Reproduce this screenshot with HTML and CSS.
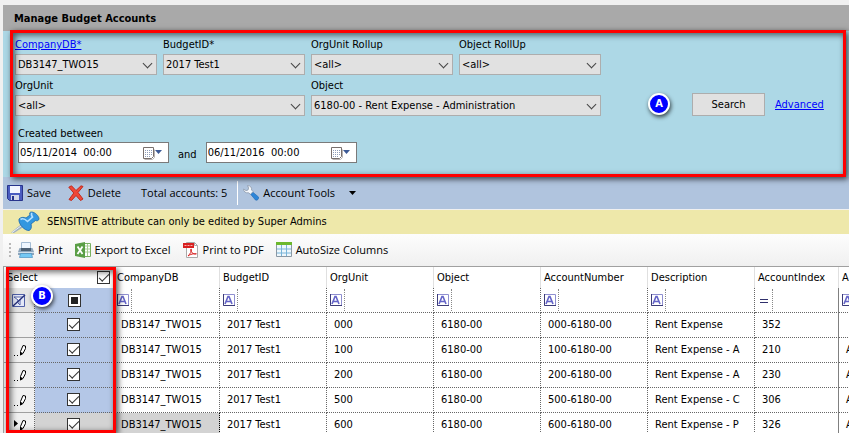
FILE: index.html
```html
<!DOCTYPE html>
<html lang="en">
<head>
<meta charset="utf-8">
<title>Manage Budget Accounts</title>
<link rel="stylesheet" href="styles.css">
</head>
<body>
<svg class="defs" aria-hidden="true">
  <symbol id="pencil" viewBox="0 0 14 14">
    <path d="M7.500 12 7.500 8.500 10 2.500l2.500.5v2.500L10 10.500z" fill="#fff" stroke="#000"/>
    <path d="m7 12.500 3-2.500-2.500-1z" fill="#000"/>
  </symbol>
  <symbol id="dots" viewBox="0 0 14 14">
    <path d="M1 12.500h1M4 12.500h1" stroke="#000"/>
  </symbol>
  <symbol id="text-filter" viewBox="0 0 12 12">
    <path d="M.5.5h11v11H.5z" fill="#fff" stroke="#8f8fd0"/>
    <path d="M.5 0v11.500H12" fill="none" stroke="#3c3c78"/>
    <path d="M2 10 5 2.500h1L9 10M3.500 7.500h4" fill="none" stroke="#6464c8" stroke-width="1.600"/>
  </symbol>
  <symbol id="calendar" viewBox="0 0 20 14">
    <path d="M2.500 13.500h8l2-2v-8" fill="none" stroke="#b8b4b4"/>
    <path d="M1.500 1.500h10v9l-2 2h-8z" fill="#fff" stroke="#776f6c"/>
    <path d="M3 4.500h7M3 6.500h7M3 8.500h7M3 10.500h5" stroke="#8f9db8" stroke-dasharray="1 1"/>
    <path d="M13 4h7l-3.500 4z" fill="#3c5a96"/>
  </symbol>
</svg>
<main class="window">
  <h1 class="title">Manage Budget Accounts</h1>

  <form class="criteria">
    <div class="fields">
      <div class="field"><label for="company"><a href="#company">CompanyDB*</a></label>
        <span class="combo"><select id="company"><option>DB3147_TWO15</option></select></span></div>
      <div class="field"><label for="budget">BudgetID*</label>
        <span class="combo"><select id="budget"><option>2017 Test1</option></select></span></div>
      <div class="field"><label for="unit-rollup">OrgUnit Rollup</label>
        <span class="combo"><select id="unit-rollup"><option>&lt;all&gt;</option></select></span></div>
      <div class="field"><label for="object-rollup">Object RollUp</label>
        <span class="combo"><select id="object-rollup"><option>&lt;all&gt;</option></select></span></div>
      <div class="field wide"><label for="unit">OrgUnit</label>
        <span class="combo"><select id="unit"><option>&lt;all&gt;</option></select></span></div>
      <div class="field wide"><label for="object">Object</label>
        <span class="combo"><select id="object"><option>6180-00 - Rent Expense - Administration</option></select></span></div>
    </div>
    <div class="actions">
      <span class="badge">A</span>
      <button type="button" class="search">Search</button>
      <a href="#advanced">Advanced</a>
    </div>
    <div class="created">
      <label for="from">Created between</label>
      <div class="dates">
        <span class="date"><input id="from" type="text" value="05/11/2014  00:00"><button type="button" aria-label="Pick start date"><svg width="20" height="14"><use href="#calendar"/></svg></button></span>
        <label for="to">and</label>
        <span class="date"><input id="to" type="text" value="06/11/2016  00:00"><button type="button" aria-label="Pick end date"><svg width="20" height="14"><use href="#calendar"/></svg></button></span>
      </div>
    </div>
    <span class="outline"></span>
  </form>

  <div class="toolbar main-tools">
    <button type="button"><svg width="16" height="16" viewBox="0 0 16 16"><path d="M.5.5h15v15h-13l-2-2z" fill="#4a5cc0" stroke="#28348c"/><path d="M3 1h10v7H3z" fill="#f4f6ff"/><path d="M4 10h8v5H4z" fill="#d4d8e8"/><path d="M5 11h2v4H5z" fill="#28348c"/></svg>Save</button>
    <button type="button"><svg width="16" height="16" viewBox="0 0 16 16"><path d="M.8 2.200 3.500.8 8 5.500 13 .8l2 .7-5 6 5 6.500-2.500 1.500L8 10.500l-4.500 5-2.500-1 4.800-6.500z" fill="#f04838" stroke="#c02c20"/></svg>Delete</button>
    <span class="total">Total accounts: 5</span>
    <button type="button" class="tools"><svg width="16" height="16" viewBox="0 0 16 16"><path d="m7 8.500 2-2 6.500 5.500c1 1.500-1.500 4-3 3z" fill="#2e86d8" stroke="#1c66b0" stroke-width=".6"/><path d="M4.500.6C7.500.6 9 2.500 8.600 5L10.200 6.600 7.400 9.300 5.500 7.800C2.500 8.300.5 6.500.6 4L3 5.600 5 5 5.600 3z" fill="#f4f7fb" stroke="#8d99ab" stroke-width=".8"/></svg>Account Tools<svg class="caret" width="7" height="4" viewBox="0 0 7 4"><path d="M0 0h7L3.500 4z"/></svg></button>
  </div>

  <p class="notice"><svg width="30" height="22" viewBox="0 0 30 22"><path d="m0 21.500 11-9 3 2.500L3 22z" fill="#9eb0c0"/><path d="m1 21.500 11-8" stroke="#fff" stroke-width=".8"/><path d="M8 8c2-2 5-2 7-1l4-3c-1-2 0-3 1.500-3C24 1 28 5 28 8c-.500 2-2.500 2-3.500 1.500L20 13c1 3 0 6-2 6.500C14 20 7 13 8 8z" fill="#3397e0" stroke="#1b69ad" stroke-width=".8"/><path d="M9.500 8.500c2-1.500 5 0 7 2l5-4.500c-1-1.500-1.500-3-.5-4" fill="none" stroke="#b4e0ff" stroke-width="1.600"/></svg>SENSITIVE attribute can only be edited by Super Admins</p>

  <div class="toolbar export-tools">
    <span class="grip"></span>
    <button type="button"><svg width="16" height="16" viewBox="0 0 16 16"><path d="M3.500.5h9V8h-9z" fill="#eef6ff" stroke="#a4bcd4"/><path d="M1.500 6h13L16 10v3H0v-3z" fill="#8ea6bc"/><path d="M3 6h10v3H3z" fill="#4c6074"/><path d="M0 10h16v1H0z" fill="#d4e0ea"/><path d="M2.500 11.500h11l1 4h-13z" fill="#74c8f4" stroke="#4c90c0" stroke-width=".7"/></svg>Print</button>
    <button type="button"><svg width="16" height="16" viewBox="0 0 16 16"><path d="M5 1.500h10.500v13H5z" fill="#fff" stroke="#78b060"/><path d="M10 4h5M10 7h5M10 10h5M12.500 2v12" stroke="#a4cc90"/><path d="M0 2 10 0v16L0 14z" fill="#5a9e46"/><path d="m2.500 4.500 5 7.500M7.500 4.500l-5 7.500" stroke="#fff" stroke-width="1.800"/></svg>Export to Excel</button>
    <button type="button"><svg width="16" height="16" viewBox="0 0 16 16"><path d="M3.500.5h8l3 3v12h-11z" fill="#fff" stroke="#aaa"/><path d="M11.500.5v3h3" fill="none" stroke="#aaa"/><path d="M0 1h11v5H0z" fill="#d82020"/><path d="M1.500 3.500h8" stroke="#f8b0b0" stroke-dasharray="2 1"/><path d="M5 14c2-2 4-5 3.500-6.500S7 8 8 9.500s3 3 5 2.500-4-1-8 2z" fill="none" stroke="#d82020"/></svg>Print to PDF</button>
    <button type="button"><svg width="16" height="16" viewBox="0 0 16 16"><path d="M.5.5h15v14H.5z" fill="#eef7fc" stroke="#8a98a4"/><path d="M0 0h16v3H0z" fill="#6cb82c"/><path d="M1 7h14M1 11h14M5.500 3v11M10.500 3v11" stroke="#78b4d8"/></svg>AutoSize Columns</button>
  </div>

  <section class="grid">
    <table>
      <colgroup><col class="c-state"><col class="c-check"><col class="c-company"><col class="c-data"><col class="c-data"><col class="c-data"><col class="c-data"><col class="c-data"><col class="c-index"><col class="c-data"></colgroup>
      <thead>
        <tr class="heads"><th colspan="2"><label class="select-all">Select <input type="checkbox" checked></label></th><th>CompanyDB</th><th>BudgetID</th><th>OrgUnit</th><th>Object</th><th>AccountNumber</th><th>Description</th><th>AccountIndex</th><th>A</th></tr>
        <tr class="filters">
          <td class="state"><svg width="14" height="13" viewBox="0 0 14 13"><path d="M.5.5h12v12H.5z" fill="#e4e8f8" stroke="#5060a8"/><path d="M2 3h9L8 6v5L6 9V6z" fill="#fff" stroke="#5060a8"/><path d="m1 12 12-11" stroke="#28327c" stroke-width="1.500"/></svg></td>
          <td class="check"><input type="checkbox" class="mixed" aria-label="Filter by selection"></td>
          <td><span class="op"><svg><use href="#text-filter"/></svg></span></td><td><span class="op"><svg><use href="#text-filter"/></svg></span></td><td><span class="op"><svg><use href="#text-filter"/></svg></span></td><td><span class="op"><svg><use href="#text-filter"/></svg></span></td><td><span class="op"><svg><use href="#text-filter"/></svg></span></td><td><span class="op"><svg><use href="#text-filter"/></svg></span></td><td class="solid"><span class="op"><svg viewBox="0 0 12 12"><path d="M2 5.500h8M2 8.500h8" stroke="#30306c"/></svg></span></td><td><span class="op"><svg><use href="#text-filter"/></svg></span></td>
        </tr>
      </thead>
      <tbody>
        <tr><td class="state"></td><td class="check"><input type="checkbox" checked aria-label="Select 352"></td><td>DB3147_TWO15</td><td>2017 Test1</td><td>000</td><td>6180-00</td><td>000-6180-00</td><td>Rent Expense</td><td class="solid">352</td><td></td></tr>
        <tr><td class="state"><svg width="14" height="14"><use href="#pencil"/><use href="#dots"/></svg></td><td class="check"><input type="checkbox" checked aria-label="Select 210"></td><td>DB3147_TWO15</td><td>2017 Test1</td><td>100</td><td>6180-00</td><td>100-6180-00</td><td>Rent Expense - A</td><td class="solid">210</td><td>A</td></tr>
        <tr><td class="state"><svg width="14" height="14"><use href="#pencil"/><use href="#dots"/></svg></td><td class="check"><input type="checkbox" checked aria-label="Select 230"></td><td>DB3147_TWO15</td><td>2017 Test1</td><td>200</td><td>6180-00</td><td>200-6180-00</td><td>Rent Expense - A</td><td class="solid">230</td><td>A</td></tr>
        <tr><td class="state"><svg width="14" height="14"><use href="#pencil"/><use href="#dots"/></svg></td><td class="check"><input type="checkbox" checked aria-label="Select 306"></td><td>DB3147_TWO15</td><td>2017 Test1</td><td>500</td><td>6180-00</td><td>500-6180-00</td><td>Rent Expense - C</td><td class="solid">306</td><td>A</td></tr>
        <tr class="current"><td class="state"><svg width="14" height="14"><use href="#pencil"/><path d="M1 2v7l4-3.500z"/></svg></td><td class="check"><input type="checkbox" checked aria-label="Select 326"></td><td class="focus">DB3147_TWO15</td><td>2017 Test1</td><td>600</td><td>6180-00</td><td>600-6180-00</td><td>Rent Expense - P</td><td class="solid">326</td><td>A</td></tr>
      </tbody>
    </table>
    <span class="outline"></span>
    <span class="badge">B</span>
  </section>
</main>
</body>
</html>
```
FILE: styles.css
```css
* { box-sizing: border-box; }

body {
  margin: 0;
  background: #f0f0f0;
  color: #000;
  font: 11px/14px "DejaVu Sans Condensed", "DejaVu Sans", sans-serif;
}

button, input, select { font: inherit; color: inherit; margin: 0; }
a { color: #00f; }
.defs { display: none; }

.window {
  display: flex;
  flex-direction: column;
  height: 100vh;
  padding: 5px 0 0 3px;
  overflow: hidden;
}

.title {
  margin: 0;
  padding: 0 11px;
  background: #a9a9a9;
  font-size: 11px;
  line-height: 28px;
  height: 26px;
  flex: none;
}

/* Search criteria */
.criteria {
  position: relative;
  z-index: 1;
  flex: none;
  display: grid;
  grid-template-columns: 586px 1fr;
  column-gap: 47px;
  padding: 3px 12px 14px;
  background: #add8e6;
}
.fields { display: grid; grid-template-columns: repeat(4, 1fr); column-gap: 6px; }
.field { display: flex; flex-direction: column; }
.field label { line-height: 22px; height: 20px; white-space: nowrap; }
.wide { grid-column: span 2; }
.combo { position: relative; display: flex; }
.combo select {
  appearance: none;
  width: 100%;
  height: 21px;
  padding: 0 20px 0 2px;
  border: 1px solid #adadad;
  border-radius: 0;
  background: #e1e1e1;
}
.combo::after {
  content: "";
  position: absolute;
  right: 6px;
  top: 6px;
  width: 6px;
  height: 6px;
  border: solid #444;
  border-width: 0 1px 1px 0;
  transform: rotate(45deg);
  pointer-events: none;
}
.actions { display: flex; align-items: center; align-self: end; height: 24px; }
.actions a { padding-top: 2px; }
.search {
  width: 73px;
  height: 23px;
  margin: 0 10px 0 22px;
  padding: 2px 0 0;
  border: 1px solid #adadad;
  background: #e1e1e1;
}
.created { grid-column: 1 / -1; padding: 10px 3px 0; }
.created > label { display: block; line-height: 16px; }
.dates { display: flex; align-items: center; gap: 9px; }
.dates label { padding-top: 4px; }
.date {
  display: flex;
  align-items: center;
  width: 151px;
  height: 21px;
  border: 1px solid #7a7a7a;
  background: #fff;
}
.date input { flex: 1; min-width: 0; border: 0; padding: 0 1px; background: none; white-space: pre; }
.date button { border: 0; padding: 0 6px; background: none; display: flex; }

/* Callouts */
.outline {
  position: absolute;
  border: 3px solid #f00;
  box-shadow: 2px 2px 6px rgba(0, 0, 0, .7), inset 2px 2px 6px rgba(0, 0, 0, .6);
  pointer-events: none;
}
.criteria .outline { inset: -1px 3px 0 7px; }
.badge {
  width: 22px;
  height: 22px;
  border: 2px solid #fff;
  border-radius: 50%;
  background: #00f;
  box-shadow: 1px 2px 4px rgba(0, 0, 0, .7);
  color: #fff;
  font-weight: bold;
  line-height: 18px;
  text-align: center;
}

/* Toolbars */
.toolbar { display: flex; align-items: center; flex: none; height: 32px; font: 11px/16px "Open Sans", sans-serif; }
.toolbar button { display: flex; align-items: center; gap: 4px; padding: 0; border: 0; background: none; white-space: nowrap; }
.main-tools { background: #b0c4de; padding-left: 4px; gap: 17px; }
.main-tools .total { margin: 0 -7px 0 3px; }
.main-tools .tools { height: 24px; border-left: 1px solid #fff; padding-left: 5px; }
.main-tools .caret { margin-left: 10px; }
.export-tools { background: linear-gradient(#fdfdfd, #f0f0f0); padding-left: 6px; gap: 12px; }
.export-tools .grip { margin-right: -5px; }
.grip { width: 2px; height: 14px; background: repeating-linear-gradient(#b8b8b8 0 2px, transparent 2px 4px); }

.notice {
  display: flex;
  align-items: center;
  flex: none;
  gap: 6px;
  height: 25px;
  margin: 0;
  padding-left: 8px;
  border-top: 1px solid #f0f0f0;
  background: #eee8aa;
}

/* Accounts grid */
.grid {
  position: relative;
  flex: 1;
  min-height: 0;
  overflow: hidden;
  border: solid #a0a0a0;
  border-width: 1px 0 0 1px;
  background: #fff;
}
table { table-layout: fixed; width: 939px; border-collapse: separate; border-spacing: 0; }
.c-state { width: 31px; }
.c-check { width: 79px; }
.c-company { width: 106px; }
.c-data { width: 107px; }
.c-index { width: 84px; }
th, td { overflow: hidden; white-space: nowrap; text-align: left; font-weight: normal; }
th { height: 21px; padding: 0 3px; border-right: 1px solid #e0e0e0; }
td { height: 25px; padding: 0 7px; border: dotted #666; border-width: 0 1px 1px 0; }
.solid { border-right: 1px solid #808080; }
.select-all { display: flex; align-items: center; justify-content: space-between; }
td.state { padding: 0 8px 0 9px; background: #f0f0f0; border-bottom: 1px solid #a0a0a0; }
.state svg { display: block; }
td.check { padding: 0 1px 1px 0; background: #b4c7e7; text-align: center; }
.filters td { height: 25px; padding: 0 3px; }
.filters td.state { padding: 0 8px; background: #e4e4e4; }
.op { display: flex; align-items: center; width: 15px; height: 22px; border-right: 1px dotted #888; }
.op svg { width: 12px; height: 12px; }
.current td.check, .current .focus { background: #d3d3d3; }
.focus { border-color: #000; }

.grid input {
  appearance: none;
  display: inline-grid;
  place-items: center;
  width: 13px;
  height: 13px;
  border: 1px solid #333;
  background: #fff;
  vertical-align: middle;
}
.grid input:checked::before {
  content: "";
  width: 9px;
  height: 4px;
  border: solid #333;
  border-width: 0 0 1px 1px;
  transform: translateY(-1px) rotate(-45deg);
}
.grid .mixed::before { content: ""; width: 7px; height: 7px; background: #222; }
.grid .outline { left: 2px; top: 0; bottom: 0; width: 110px; }
.grid .badge { position: absolute; left: 27px; top: 18px; }
```
